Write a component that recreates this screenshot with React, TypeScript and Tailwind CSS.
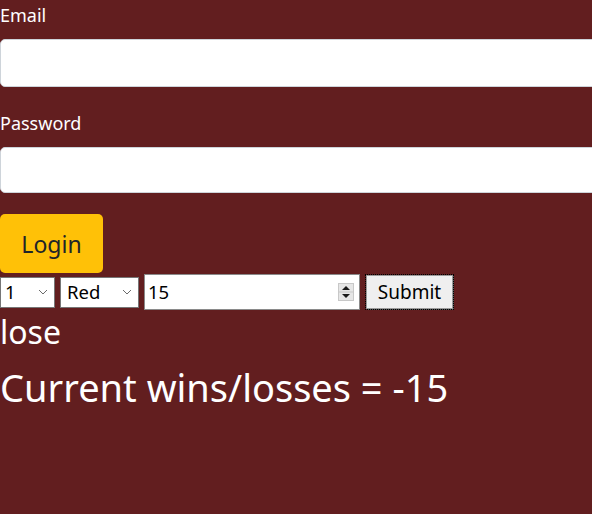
import { useState } from "react";

const font = { fontFamily: '"Noto Sans", "Open Sans", sans-serif' };

const Chevron = () => (
  <svg width="10" height="6" viewBox="0 0 10 6" className="shrink-0">
    <path d="M1 1l4 4 4-4" fill="none" stroke="#6b6b6b" strokeWidth="1" />
  </svg>
);

const Spinner = () => (
  <svg width="16" height="18" viewBox="0 0 16 18" className="shrink-0">
    <rect x="0.5" y="0.5" width="15" height="17" fill="#e6e6e6" stroke="#c8c8c8" />
    <line x1="1" y1="9" x2="15" y2="9" stroke="#c8c8c8" />
    <path d="M4 7l4-4 4 4z" fill="#1a1a1a" />
    <path d="M4 11l4 4 4-4z" fill="#1a1a1a" />
  </svg>
);

export default function App() {
  const [email, setEmail] = useState("");
  const [password, setPassword] = useState("");

  return (
    <div
      className="w-[592px] h-[514px] overflow-hidden bg-[#621e1f] text-white"
      style={font}
    >
      <form className="flex flex-col">
        <label className="text-[18px] leading-[30px] h-[30px]">Email</label>
        <input
          type="email"
          value={email}
          onChange={(e) => setEmail(e.target.value)}
          className="mt-[9px] w-[640px] h-[48px] bg-white rounded-[5px] border border-[#ced4da] text-black px-4"
        />
        <label className="mt-[21px] text-[18px] leading-[30px] h-[30px]">Password</label>
        <input
          type="password"
          value={password}
          onChange={(e) => setPassword(e.target.value)}
          className="mt-[9px] w-[640px] h-[46px] bg-white rounded-[5px] border border-[#ced4da] text-black px-4"
        />
        <div className="mt-[21px]">
          <button
            type="button"
            className="h-[59px] w-[103px] bg-[#ffc107] rounded-[5px] text-[#212529] text-[23px] pt-[2px]"
          >
            Login
          </button>
        </div>
      </form>

      <div className="flex items-center h-[36px] mt-px text-black text-[18.5px]">
        <div className="flex items-center justify-between w-[55px] h-[31px] bg-white border border-[#767676] pl-[4px] pr-[6px]">
          <span>1</span>
          <Chevron />
        </div>
        <div className="ml-[5px] flex items-center justify-between w-[79px] h-[31px] bg-white border border-[#767676] pl-[6px] pr-[6px]">
          <span>Red</span>
          <Chevron />
        </div>
        <div className="ml-[5px] flex items-center justify-between w-[216px] h-[36px] bg-white border border-[#8a8a8a] pl-[3px] pr-[5px]">
          <span>15</span>
          <Spinner />
        </div>
        <button
          type="button"
          className="ml-[6px] w-[87px] h-[34px] bg-[#efefef] border border-[#9a9a9a] outline-1 outline-dotted outline-black shadow-[1px_1px_0_#555] text-[19px]"
        >
          Submit
        </button>
      </div>

      <div className="mt-[2px] text-[32px] leading-[40px]">lose</div>
      <div className="mt-[9px] text-[38px] leading-[52px]">Current wins/losses = -15</div>
    </div>
  );
}
